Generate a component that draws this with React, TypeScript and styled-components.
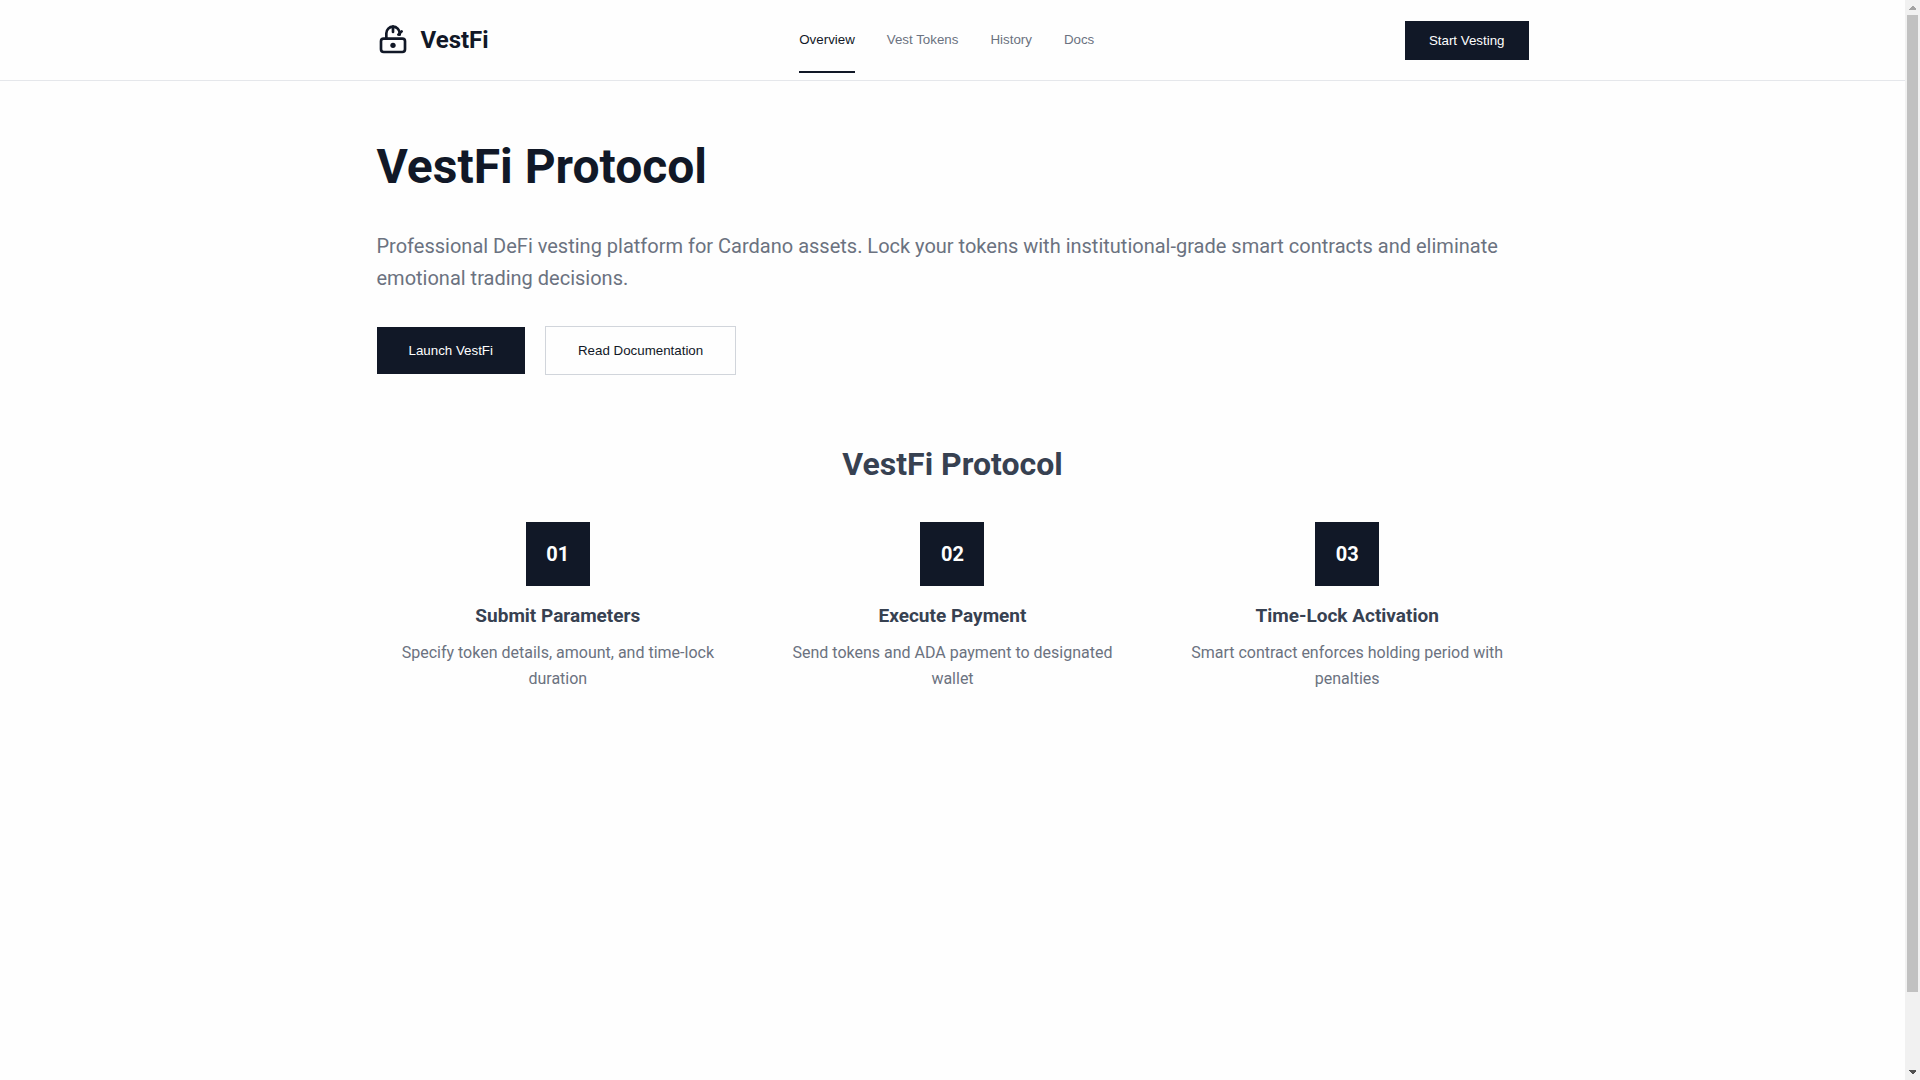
import React from "react";
import styled, { createGlobalStyle } from "styled-components";

const GlobalStyle = createGlobalStyle`
  *, *::before, *::after { box-sizing: border-box; }
  body {
    margin: 0;
    background: #fefefe;
    color: #111827;
    font-family: Roboto, sans-serif;
    font-size: 16px;
    line-height: 26px;
  }
  button { font: 13.3333px "Liberation Sans", Arial, sans-serif; line-height: 15px; cursor: pointer; }
  h1, h2, h3, p { margin: 0; }
`;

const Frame = styled.div`
  display: flex;
  height: 100vh;
`;

const Page = styled.div`
  flex: 1;
  min-width: 0;
  overflow-y: auto;
  scrollbar-width: none;
`;

const ScrollTrack = styled.div`
  display: flex;
  flex-direction: column;
  width: 15px;
  background: #f1f1f1;
`;

const ScrollArrow = styled.svg`
  display: block;
  flex: none;
  width: 15px;
  height: 15px;
`;

const ScrollLane = styled.div`
  flex: 1;
  padding: 0 2px;
`;

const ScrollThumb = styled.div`
  height: 93%;
  background: #c1c1c1;
`;

const Container = styled.div`
  width: 100%;
  max-width: 1200px;
  margin: 0 auto;
  padding: 0 24px;
`;

const Header = styled.header`
  position: sticky;
  top: 0;
  background: #fefefe;
  border-bottom: 1px solid #e5e7eb;
`;

const HeaderRow = styled(Container)`
  display: flex;
  align-items: center;
  justify-content: space-between;
  min-height: 80px;
`;

const Brand = styled.div`
  display: flex;
  align-items: center;
  gap: 12px;
  font-size: 24px;
  font-weight: 700;
  line-height: 38px;
`;

const Nav = styled.nav`
  display: flex;
  gap: 32px;
`;

const NavButton = styled.button<{ $active?: boolean }>`
  padding: 24px 0;
  border: 0;
  border-bottom: 2px solid ${(p) => (p.$active ? "#111827" : "transparent")};
  background: none;
  color: ${(p) => (p.$active ? "#111827" : "#6b7280")};
`;

const PrimaryButton = styled.button<{ $large?: boolean }>`
  padding: ${(p) => (p.$large ? "16px 32px" : "12px 24px")};
  border: 0;
  background: #111827;
  color: #fefefe;
`;

const SecondaryButton = styled.button`
  padding: 16px 32px;
  border: 1px solid #d1d5db;
  background: #fefefe;
  color: #111827;
`;

const Main = styled.main`
  min-height: 100vh;
  padding: 48px 0;
`;

const Hero = styled.section`
  display: flex;
  flex-direction: column;
`;

const Title = styled.h1`
  margin-bottom: 26px;
  font-size: 48px;
  font-weight: 700;
  line-height: 75px;
`;

const Lead = styled.p`
  margin-bottom: 32px;
  color: #6b7280;
  font-size: 20px;
  line-height: 32px;
`;

const Actions = styled.div`
  display: flex;
  align-items: center;
  gap: 20px;
`;

const Process = styled.section`
  padding-top: 64px;
`;

const SectionTitle = styled.h2`
  margin-bottom: 32px;
  color: #374151;
  font-size: 32px;
  font-weight: 700;
  line-height: 51px;
  text-align: center;
`;

const Steps = styled.div`
  display: grid;
  grid-template-columns: repeat(3, 1fr);
  gap: 32px;
`;

const Step = styled.article`
  display: flex;
  flex-direction: column;
  align-items: center;
  text-align: center;
`;

const StepNumber = styled.div`
  display: grid;
  place-items: center;
  width: 64px;
  height: 64px;
  margin-bottom: 16px;
  background: #111827;
  color: #fefefe;
  font-size: 20px;
  font-weight: 700;
`;

const StepTitle = styled.h3`
  margin-bottom: 10px;
  color: #374151;
  font-size: 19px;
  font-weight: 700;
  line-height: 28px;
`;

const StepText = styled.p`
  color: #6b7280;
`;

const navItems = ["Overview", "Vest Tokens", "History", "Docs"];

const steps = [
  { title: "Submit Parameters", text: "Specify token details, amount, and time-lock duration" },
  { title: "Execute Payment", text: "Send tokens and ADA payment to designated wallet" },
  { title: "Time-Lock Activation", text: "Smart contract enforces holding period with penalties" },
];

function LockLogo() {
  return (
    <svg
      width="32"
      height="32"
      viewBox="0 0 24 24"
      fill="none"
      stroke="#111827"
      strokeWidth="2"
      strokeLinecap="round"
      strokeLinejoin="round"
      aria-hidden="true"
    >
      <rect x="3" y="11" width="18" height="10" rx="2" />
      <path d="M7 11V7a5 5 0 0 1 10 0v1" />
      <circle cx="12" cy="16" r="2" fill="#111827" stroke="none" />
      <path d="M12 2v4" />
      <path d="M16 8l2.5-2.5" />
    </svg>
  );
}

export default function App() {
  return (
    <Frame>
      <GlobalStyle />
      <Page>
        <Header>
          <HeaderRow>
            <Brand>
              <LockLogo />
              <span>VestFi</span>
            </Brand>
            <Nav aria-label="Main">
              {navItems.map((item, i) => (
                <NavButton key={item} type="button" $active={i === 0}>
                  {item}
                </NavButton>
              ))}
            </Nav>
            <PrimaryButton type="button">Start Vesting</PrimaryButton>
          </HeaderRow>
        </Header>
        <Main>
          <Container>
            <Hero>
              <Title>VestFi Protocol</Title>
              <Lead>
                Professional DeFi vesting platform for Cardano assets. Lock your tokens with institutional-grade smart
                contracts and eliminate emotional trading decisions.
              </Lead>
              <Actions>
                <PrimaryButton type="button" $large>
                  Launch VestFi
                </PrimaryButton>
                <SecondaryButton type="button">Read Documentation</SecondaryButton>
              </Actions>
            </Hero>
            <Process>
              <SectionTitle>VestFi Protocol</SectionTitle>
              <Steps>
                {steps.map((step, i) => (
                  <Step key={step.title}>
                    <StepNumber>{String(i + 1).padStart(2, "0")}</StepNumber>
                    <StepTitle>{step.title}</StepTitle>
                    <StepText>{step.text}</StepText>
                  </Step>
                ))}
              </Steps>
            </Process>
          </Container>
        </Main>
      </Page>
      <ScrollTrack aria-hidden="true">
        <ScrollArrow viewBox="0 0 15 15" shapeRendering="crispEdges">
          <path d="M4 10h7v-1l-3.5-3.5L4 9z" fill="#a3a3a3" />
        </ScrollArrow>
        <ScrollLane>
          <ScrollThumb />
        </ScrollLane>
        <ScrollArrow viewBox="0 0 15 15" shapeRendering="crispEdges">
          <path d="M4 5h7v1l-3.5 3.5L4 6z" fill="#505050" />
        </ScrollArrow>
      </ScrollTrack>
    </Frame>
  );
}
